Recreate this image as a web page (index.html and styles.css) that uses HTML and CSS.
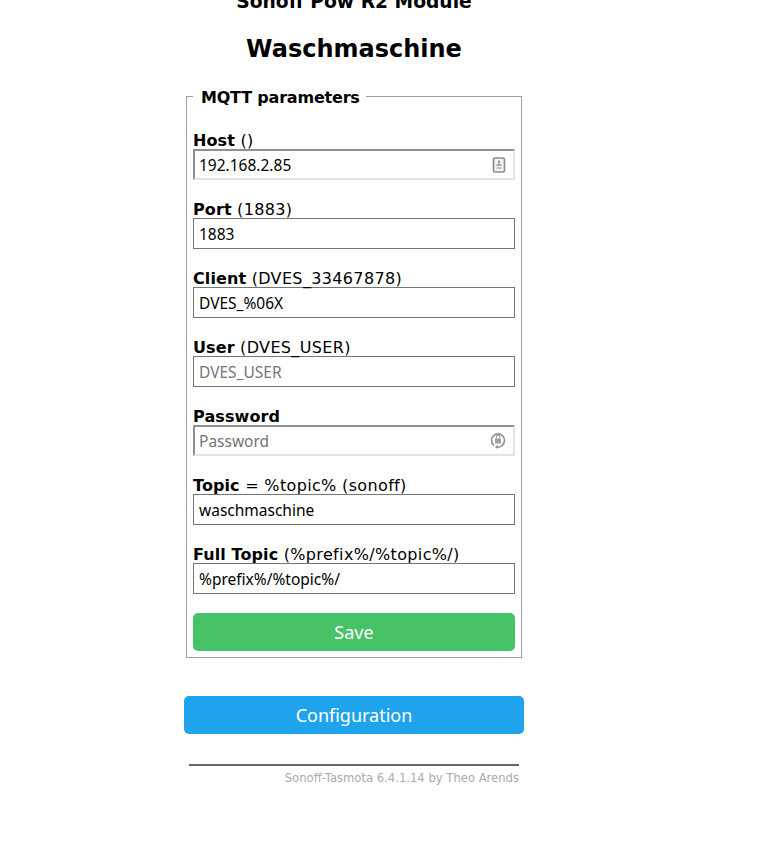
FILE: index.html
```html
<!DOCTYPE html>
<html>
<head>
  <title>Waschmaschine - MQTT</title>
  <link rel="stylesheet" href="styles.css">
</head>
<body>
  <div class="page">
    <div class="titles">
      <h3>Sonoff Pow R2 Module</h3>
      <h2>Waschmaschine</h2>
    </div>
    <fieldset class="panel">
      <legend>MQTT parameters</legend>
      <form>
        <div class="field">
          <label><b>Host</b> ()</label>
          <div class="input inset">
            <span>192.168.2.85</span>
            <svg class="field-icon" width="14" height="16" viewBox="0 0 14 16">
              <rect x="1.5" y="1" width="11" height="14" rx="1.5" fill="#f2f2f2" stroke="#8a8a8a" stroke-width="1.6"/>
              <rect x="6" y="3.5" width="2" height="3" fill="#999"/>
              <rect x="4.5" y="7" width="5" height="2" fill="#aaa"/>
              <rect x="4.5" y="10" width="5" height="2" fill="#c4c4c4"/>
            </svg>
          </div>
        </div>
        <div class="field">
          <label><b>Port</b> (1883)</label>
          <div class="input"><span>1883</span></div>
        </div>
        <div class="field">
          <label><b>Client</b> (DVES_33467878)</label>
          <div class="input"><span>DVES_%06X</span></div>
        </div>
        <div class="field">
          <label><b>User</b> (DVES_USER)</label>
          <div class="input"><span class="placeholder">DVES_USER</span></div>
        </div>
        <div class="field">
          <label><b>Password</b></label>
          <div class="input inset">
            <span class="placeholder">Password</span>
            <svg class="field-icon" width="16" height="18" viewBox="0 0 16 18">
              <path d="M4 13.5A6.5 6.5 0 1 1 12 13.5" fill="none" stroke="#8f8f8f" stroke-width="1.6"/>
              <path d="M12 13.5A6.5 6.5 0 0 1 6 15" fill="none" stroke="#8f8f8f" stroke-width="1.6"/>
              <path d="M7.5 13l-2.5 2 2.5 2z" fill="#8f8f8f"/>
              <rect x="5" y="6.5" width="6" height="5" rx="0.5" fill="#a0a0a0"/>
              <path d="M6.3 6.5V5a1.7 1.7 0 0 1 3.4 0v1.5" fill="none" stroke="#a0a0a0" stroke-width="1.2"/>
            </svg>
          </div>
        </div>
        <div class="field">
          <label><b>Topic</b> = %topic% (sonoff)</label>
          <div class="input"><span>waschmaschine</span></div>
        </div>
        <div class="field">
          <label><b>Full Topic</b> (%prefix%/%topic%/)</label>
          <div class="input"><span>%prefix%/%topic%/</span></div>
        </div>
        <button type="button" class="button save-button">Save</button>
      </form>
    </fieldset>
    <button type="button" class="button config-button">Configuration</button>
    <div class="footer">
      <hr>
      <div class="credit">Sonoff-Tasmota 6.4.1.14 by Theo Arends</div>
    </div>
  </div>
</body>
</html>
```

FILE: styles.css
```css
* {
  box-sizing: border-box;
}

html, body {
  margin: 0;
  padding: 0;
  background: #fff;
  overflow: hidden;
}

body {
  height: 862px;
  font-family: "DejaVu Sans", Verdana, sans-serif;
  font-size: 16px;
  color: #000;
}

.page {
  width: 340px;
  margin: -9px 0 0 184px;
}

.titles {
  text-align: center;
}

.titles h3 {
  margin: 0;
  font-size: 18.7px;
  line-height: 22px;
  font-weight: bold;
  white-space: nowrap;
}

.titles h2 {
  margin: 22px 0 0;
  font-size: 24px;
  line-height: 28px;
  font-weight: bold;
}

.panel {
  width: 335px;
  margin: 23px 0 0 2px;
  padding: 0 6px 6px;
  border: 1px solid #a0a0a0;
}

.panel legend {
  padding: 2px 6px 0 8px;
  font-size: 16px;
  line-height: 19px;
  font-weight: bold;
  letter-spacing: -0.2px;
}

.panel form {
  padding-top: 23px;
}

.field {
  margin-bottom: 19px;
}

.field label {
  display: block;
  height: 19px;
  line-height: 21px;
  font-size: 16px;
  white-space: nowrap;
  letter-spacing: 0.35px;
}

.field label b {
  letter-spacing: 0.1px;
}

.input {
  display: flex;
  align-items: center;
  justify-content: space-between;
  width: 322px;
  height: 31px;
  padding: 0 5px;
  border: 1px solid #767676;
  font-family: "Noto Sans", Tahoma, sans-serif;
  font-size: 15.5px;
  white-space: nowrap;
}

.input.inset {
  border: 2px solid;
  border-color: #8f8f8f #e3e3e3 #e3e3e3 #8f8f8f;
  padding: 0 7px 0 4px;
}

.placeholder {
  color: #757575;
}

.field-icon {
  flex: 0 0 auto;
}

.button {
  display: block;
  height: 38px;
  border: 0;
  border-radius: 5px;
  color: #fff;
  font-family: "Noto Sans", Tahoma, sans-serif;
  font-size: 18px;
  line-height: 38px;
  padding: 0;
  text-align: center;
}

.save-button {
  width: 322px;
  background: #47c266;
}

.config-button {
  width: 340px;
  margin-top: 38px;
  background: #1fa3ec;
}

.footer {
  margin: 30px 5px 0;
}

.footer hr {
  margin: 0;
  border: 0;
  border-top: 2px solid #666;
}

.credit {
  margin-top: 5px;
  text-align: right;
  font-size: 11.6px;
  line-height: 14px;
  color: #aaa;
}
```
